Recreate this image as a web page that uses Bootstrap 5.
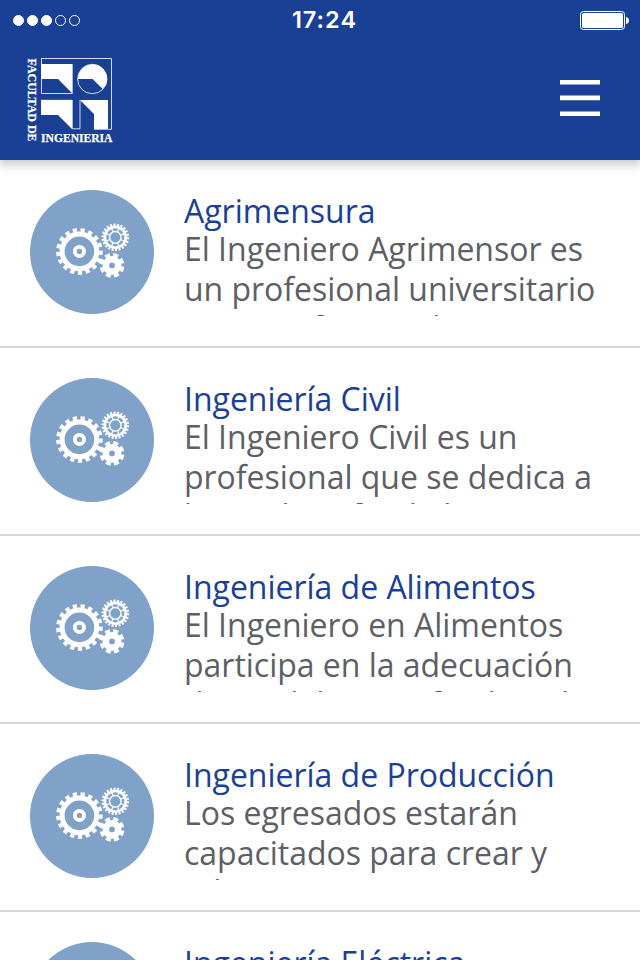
<!DOCTYPE html>
<html lang="es">
<head>
<meta charset="utf-8">
<meta name="viewport" content="width=device-width, initial-scale=1">
<title>Facultad de Ingeniería</title>
<link rel="stylesheet" href="https://cdn.jsdelivr.net/npm/bootstrap@5.3.0/dist/css/bootstrap.min.css">
<style>
html, body { height: 960px; overflow: hidden; }
body { font-family: "Open Sans", sans-serif; background: #fff; }
main { height: 800px; overflow: hidden; }
.app-top { height: 160px; background: #1a4096; box-shadow: 0 2px 10px 2px rgba(0,0,0,.24); z-index: 2; }
.status-bar { height: 40px; padding: 0 11px 0 12px; }
.clock { font: 600 23.5px/42px Inter, sans-serif; letter-spacing: 1px; margin-right: 13px; }
.brand-bar { height: 120px; padding: 0 40px 0 24px; }
.menu-icon { margin-bottom: 4px; }
.career { height: 188px; padding: 30px 30px 0; border-bottom: 2px solid #d4d9de; }
.career-icon { width: 124px; height: 124px; margin-right: 30px; }
.career-text { height: 126px; padding-top: 1px; overflow: hidden; white-space: nowrap; font-size: 32px; letter-spacing: -.02px; }
.career-title { color: #1a4096; font-size: 32px; line-height: 40px; height: 38px; font-weight: 400; }
.career-desc { color: #5d5f66; line-height: 40px; }
.desc-tail { display: block; line-height: 38px; }
</style>
<script src="https://cdn.jsdelivr.net/npm/bootstrap@5.3.0/dist/js/bootstrap.bundle.min.js"></script>
</head>
<body>
<svg class="d-none" xmlns="http://www.w3.org/2000/svg">
  <symbol id="gears" viewBox="0 0 124 124">
    <circle cx="62" cy="62" r="62" fill="#80a2c9"/>
    <g fill="none" stroke="#fff">
      <circle cx="49.4" cy="61.4" r="17.3" stroke-width="5"/>
      <circle cx="49.4" cy="61.4" r="21.2" stroke-width="4.2" pathLength="170" stroke-dasharray="5.4 4.6" stroke-dashoffset="1"/>
      <circle cx="49.4" cy="61.4" r="4.6" stroke-width="3.8"/>
      <circle cx="85.3" cy="47.3" r="10.4" stroke-width="2.6"/>
      <circle cx="85.3" cy="47.3" r="12.6" stroke-width="2.4" pathLength="220" stroke-dasharray="5.6 4.4"/>
      <circle cx="85.3" cy="47.3" r="5.8" stroke-width="1.4"/>
      <circle cx="85.3" cy="47.3" r="7.8" stroke-width="3.2" pathLength="80" stroke-dasharray="2 8" stroke-dashoffset="-4"/>
      <circle cx="82" cy="75.4" r="6.2" stroke-width="6.6"/>
      <circle cx="82" cy="75.4" r="10.2" stroke-width="4.4" pathLength="80" stroke-dasharray="6 4" stroke-dashoffset="-1.5"/>
    </g>
  </symbol>
</svg>

<header class="app-top position-relative text-white">
  <div class="status-bar d-flex align-items-center justify-content-between">
    <svg width="70" height="14" fill="#fff" stroke="#fff">
      <circle cx="6.5" cy="7.5" r="5"/><circle cx="20.5" cy="7.5" r="5"/><circle cx="34.5" cy="7.5" r="5"/>
      <circle cx="48.5" cy="7.5" r="5" fill="none"/><circle cx="62.5" cy="7.5" r="5" fill="none"/>
    </svg>
    <span class="clock">17:24</span>
    <svg width="49" height="20" viewBox="580 10 49 20">
      <rect x="580.5" y="11.5" width="44" height="18" rx="3" fill="none" stroke="#fff"/>
      <rect x="582" y="13" width="41" height="15" rx="1.5" fill="#fff"/>
      <path d="M626 17q3 .5 3 3.5t-3 3.5z" fill="#fff"/>
    </svg>
  </div>
  <div class="brand-bar d-flex align-items-center justify-content-between">
    <svg width="92" height="90" viewBox="24 55 92 90">
      <g fill="#fff">
        <path d="M41 64H72V93L58 79H41ZM41 100H72V129L58 115H41ZM80 100H108V129H94V114Z"/>
        <path d="M78 79A14.5 14.5 0 1 1 102.8 89L92.5 79Z"/>
      </g>
      <g fill="none" stroke="#fff" stroke-opacity=".8">
        <path d="M41 58.5H111.5V129.3H94M41.5 58V93.5H72.3V64M41.5 100V115M72.3 100V128.8H80V100M41 100.3H72"/>
        <circle cx="92.3" cy="79" r="14.7"/>
      </g>
      <g fill="#fff" stroke="#fff" stroke-width=".25" font-family="Liberation Serif, serif" font-weight="700" font-size="12.8">
        <text x="41" y="141.6" textLength="71.5" lengthAdjust="spacingAndGlyphs">INGENIERIA</text>
        <text transform="translate(28 58.5) rotate(90)" textLength="83" lengthAdjust="spacingAndGlyphs">FACULTAD DE</text>
      </g>
    </svg>
    <svg class="menu-icon" width="40" height="36" fill="#fff">
      <path d="M0 0H40V4.4H0ZM0 15.6H40V20.2H0ZM0 31.6H40V36H0Z"/>
    </svg>
  </div>
</header>

<main>
  <article class="career d-flex align-items-start">
    <svg class="career-icon flex-shrink-0"><use href="#gears"/></svg>
    <div class="career-text flex-grow-1">
      <h2 class="career-title m-0">Agrimensura</h2>
      <p class="career-desc m-0">El Ingeniero Agrimensor es<br>un profesional universitario<span class="desc-tail">que con fuerza el</span></p>
    </div>
  </article>
  <article class="career d-flex align-items-start">
    <svg class="career-icon flex-shrink-0"><use href="#gears"/></svg>
    <div class="career-text flex-grow-1">
      <h2 class="career-title m-0">Ingeniería Civil</h2>
      <p class="career-desc m-0">El Ingeniero Civil es un<br>profesional que se dedica a<span class="desc-tail">la produce fin de la</span></p>
    </div>
  </article>
  <article class="career d-flex align-items-start">
    <svg class="career-icon flex-shrink-0"><use href="#gears"/></svg>
    <div class="career-text flex-grow-1">
      <h2 class="career-title m-0">Ingeniería de Alimentos</h2>
      <p class="career-desc m-0">El Ingeniero en Alimentos<br>participa en la adecuación<span class="desc-tail">de modelos con fin de india</span></p>
    </div>
  </article>
  <article class="career d-flex align-items-start">
    <svg class="career-icon flex-shrink-0"><use href="#gears"/></svg>
    <div class="career-text flex-grow-1">
      <h2 class="career-title m-0">Ingeniería de Producción</h2>
      <p class="career-desc m-0">Los egresados estarán<br>capacitados para crear y<span class="desc-tail">administrar</span></p>
    </div>
  </article>
  <article class="career d-flex align-items-start">
    <svg class="career-icon flex-shrink-0"><use href="#gears"/></svg>
    <div class="career-text flex-grow-1">
      <h2 class="career-title m-0">Ingeniería Eléctrica</h2>
    </div>
  </article>
</main>
</body>
</html>
